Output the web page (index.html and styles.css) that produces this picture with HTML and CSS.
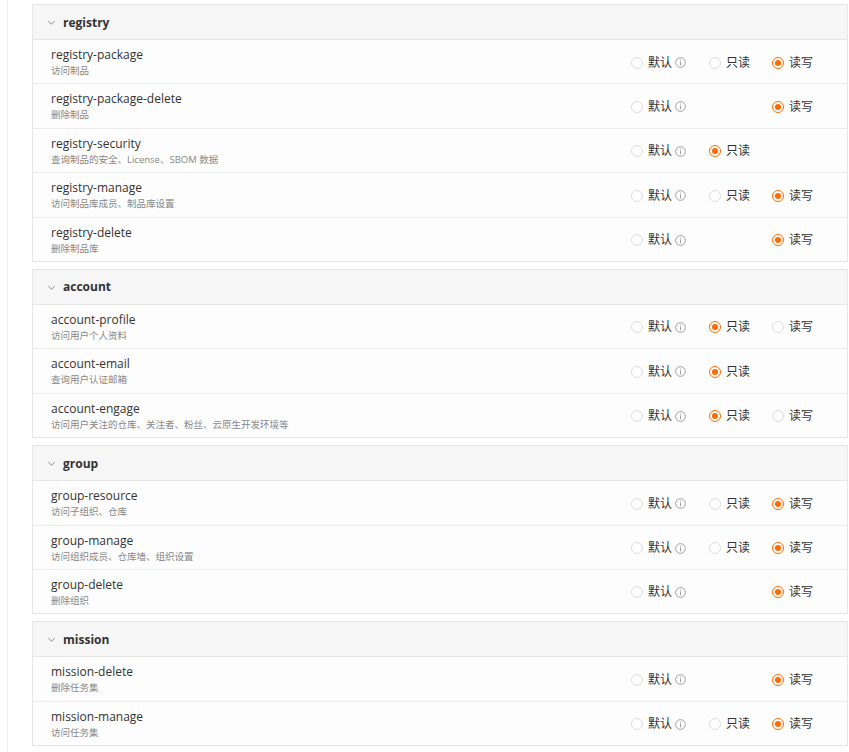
FILE: index.html
```html
<!DOCTYPE html>
<html lang="zh-CN">
<head>
  <meta charset="UTF-8">
  <title>权限范围</title>
  <link rel="stylesheet" href="styles.css">
</head>
<body>
  <div class="page">
    <div class="scopes" id="scopes"></div>
  </div>

  <script>
    // mode: which options exist and which is checked
    const groups = [
      { name: 'registry', items: [
        { key: 'registry-package', desc: '访问制品', opts: ['default', 'read', 'write'], value: 'write' },
        { key: 'registry-package-delete', desc: '删除制品', opts: ['default', 'write'], value: 'write' },
        { key: 'registry-security', desc: '查询制品的安全、License、SBOM 数据', opts: ['default', 'read'], value: 'read' },
        { key: 'registry-manage', desc: '访问制品库成员、制品库设置', opts: ['default', 'read', 'write'], value: 'write' },
        { key: 'registry-delete', desc: '删除制品库', opts: ['default', 'write'], value: 'write' }
      ]},
      { name: 'account', items: [
        { key: 'account-profile', desc: '访问用户个人资料', opts: ['default', 'read', 'write'], value: 'read' },
        { key: 'account-email', desc: '查询用户认证邮箱', opts: ['default', 'read'], value: 'read' },
        { key: 'account-engage', desc: '访问用户关注的仓库、关注者、粉丝、云原生开发环境等', opts: ['default', 'read', 'write'], value: 'read' }
      ]},
      { name: 'group', items: [
        { key: 'group-resource', desc: '访问子组织、仓库', opts: ['default', 'read', 'write'], value: 'write' },
        { key: 'group-manage', desc: '访问组织成员、仓库墙、组织设置', opts: ['default', 'read', 'write'], value: 'write' },
        { key: 'group-delete', desc: '删除组织', opts: ['default', 'write'], value: 'write' }
      ]},
      { name: 'mission', items: [
        { key: 'mission-delete', desc: '删除任务集', opts: ['default', 'write'], value: 'write' },
        { key: 'mission-manage', desc: '访问任务集', opts: ['default', 'read', 'write'], value: 'write' }
      ]}
    ];

    const labels = { default: '默认', read: '只读', write: '读写' };

    const infoIcon = `
      <svg class="info" viewBox="0 0 12 12" width="11" height="11">
        <circle cx="6" cy="6" r="5.3" fill="none" stroke="#999" stroke-width="1"/>
        <rect x="5.5" y="2.8" width="1" height="1.1" fill="#999"/>
        <rect x="5.5" y="4.9" width="1" height="4.2" fill="#999"/>
      </svg>`;

    const chevron = `
      <svg class="chevron" viewBox="0 0 10 10" width="9" height="9">
        <path d="M1.5 3.5 L5 7 L8.5 3.5" fill="none" stroke="#888" stroke-width="1.1"/>
      </svg>`;

    function renderOption(item, opt) {
      if (!item.opts.includes(opt)) return '<span class="opt"></span>';
      const checked = item.value === opt;
      return `
        <label class="opt">
          <span class="radio ${checked ? 'checked' : ''}"></span>
          <span class="opt-text">${labels[opt]}</span>
          ${opt === 'default' ? infoIcon : ''}
        </label>`;
    }

    function renderScopes() {
      document.getElementById('scopes').innerHTML = groups.map(group => `
        <div class="card">
          <div class="card-head">${chevron}<span class="card-title">${group.name}</span></div>
          ${group.items.map(item => `
            <div class="row">
              <div class="row-info">
                <div class="row-key">${item.key}</div>
                <div class="row-desc">${item.desc}</div>
              </div>
              <div class="opts">
                ${['default', 'read', 'write'].map(opt => renderOption(item, opt)).join('')}
              </div>
            </div>
          `).join('')}
        </div>
      `).join('');
    }

    renderScopes();
  </script>
</body>
</html>
```

FILE: styles.css
```css
body {
  margin: 0;
  background: #fff;
  color: #333;
  font-family: "Segoe UI", "Open Sans", "Noto Sans", "Noto Sans CJK SC", sans-serif;
}
.page {
  margin-left: 7px;
  border-left: 1px solid #eee;
  padding: 4px 1px 20px 24px;
  min-height: 760px;
}
.card {
  border: 1px solid #e6e6e6;
  background: #fdfdfd;
  margin-bottom: 7px;
}
.card-head {
  display: flex;
  align-items: center;
  height: 34px;
  padding-left: 14px;
  background: #f6f6f6;
  border-bottom: 1px solid #e6e6e6;
}
.chevron {
  margin-right: 7px;
  margin-top: 1px;
}
.card-title {
  font-size: 12px;
  font-weight: 700;
  color: #333;
}
.row {
  display: flex;
  align-items: center;
  padding: 7px 0 4.4px 18px;
  border-bottom: 1px solid #ebebeb;
}
.row:last-child {
  border-bottom: none;
}
.row-info {
  flex: 1;
}
.row-key {
  font-size: 12px;
  line-height: 16px;
  color: #333;
}
.row-desc {
  font-size: 9.5px;
  line-height: 16px;
  color: #888;
}
.opts {
  display: grid;
  grid-template-columns: 78px 63px 75px;
  margin-top: -1px;
}
.opt {
  display: flex;
  align-items: center;
  font-size: 12px;
  color: #333;
}
.radio {
  box-sizing: border-box;
  width: 12px;
  height: 12px;
  border: 1px solid #dcdcdc;
  border-radius: 50%;
  background: #fff;
  margin-right: 5px;
  position: relative;
}
.radio.checked {
  border-color: #ff6a00;
}
.radio.checked::after {
  content: "";
  position: absolute;
  left: 2px;
  top: 2px;
  width: 6px;
  height: 6px;
  border-radius: 50%;
  background: #ff6a00;
}
.opt-text {
  line-height: 16px;
}
.info {
  margin-left: 3px;
}
```
